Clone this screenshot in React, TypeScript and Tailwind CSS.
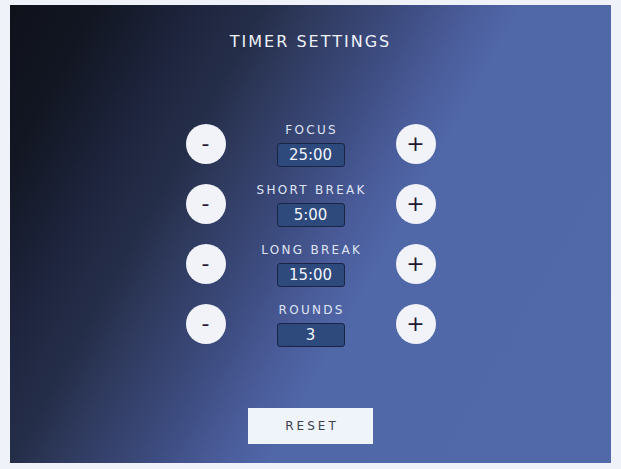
import React, { useState } from 'react';

type Setting = { key: string; label: string; value: number; min: number; format: (v: number) => string };

const mmss = (v: number) => `${v}:00`;

const initial: Setting[] = [
    { key: 'focus', label: 'FOCUS', value: 25, min: 1, format: mmss },
    { key: 'short', label: 'SHORT BREAK', value: 5, min: 1, format: mmss },
    { key: 'long', label: 'LONG BREAK', value: 15, min: 1, format: mmss },
    { key: 'rounds', label: 'ROUNDS', value: 3, min: 1, format: (v) => String(v) },
];

const RoundButton: React.FC<{ label: string; onClick: () => void }> = ({ label, onClick }) => (
    <button
        onClick={onClick}
        className="w-10 h-10 shrink-0 rounded-full bg-[#f1f3f9] text-[#221833] flex items-center justify-center text-[22px] leading-none"
    >
        {label}
    </button>
);

export default function App() {
    const [settings, setSettings] = useState(initial);

    const change = (key: string, dir: 1 | -1) =>
        setSettings((s) => s.map((x) => (x.key === key ? { ...x, value: Math.max(x.min, x.value + dir) } : x)));

    return (
        <div className="w-full h-[469px] bg-[#eff3f9] pt-[5px] px-[10px] font-['DejaVu_Sans',sans-serif]">
            <div className="h-[458px] flex flex-col items-center pt-[25px] bg-[linear-gradient(119deg,#0f121b_0%,#121622_10%,#1f2640_23%,#252e49_30%,#2f3a5e_36%,#3e4d82_47%,#4a5c9a_54%,#5067a8_60%,#5168a9_100%)]">
                <h1 className="h-6 leading-6 text-[16px] tracking-[2px] text-[#eef1f8] font-normal">TIMER SETTINGS</h1>

                <div className="mt-[60px] flex flex-col">
                    {settings.map((s) => (
                        <div key={s.key} className="h-[60px] flex items-center">
                            <RoundButton label="-" onClick={() => change(s.key, -1)} />
                            <div className="w-[170px] flex flex-col items-center gap-[5px] pt-[1px]">
                                <div className="h-4 leading-4 text-[12px] tracking-[2.3px] pl-[2.3px] text-[#dfe4f4]">{s.label}</div>
                                <div className="w-[68px] h-6 rounded-[3px] bg-[#2e4a7c] border border-[#1a2546] flex items-center justify-center text-[15px] text-[#f1f4fb]">
                                    {s.format(s.value)}
                                </div>
                            </div>
                            <RoundButton label="+" onClick={() => change(s.key, 1)} />
                        </div>
                    ))}
                </div>

                <button
                    onClick={() => setSettings(initial)}
                    className="mt-[54px] w-[125px] h-9 bg-[#eff3fa] text-[#3b3f4a] text-[12px] tracking-[3px] pl-[3px]"
                >
                    RESET
                </button>
            </div>
        </div>
    );
}
